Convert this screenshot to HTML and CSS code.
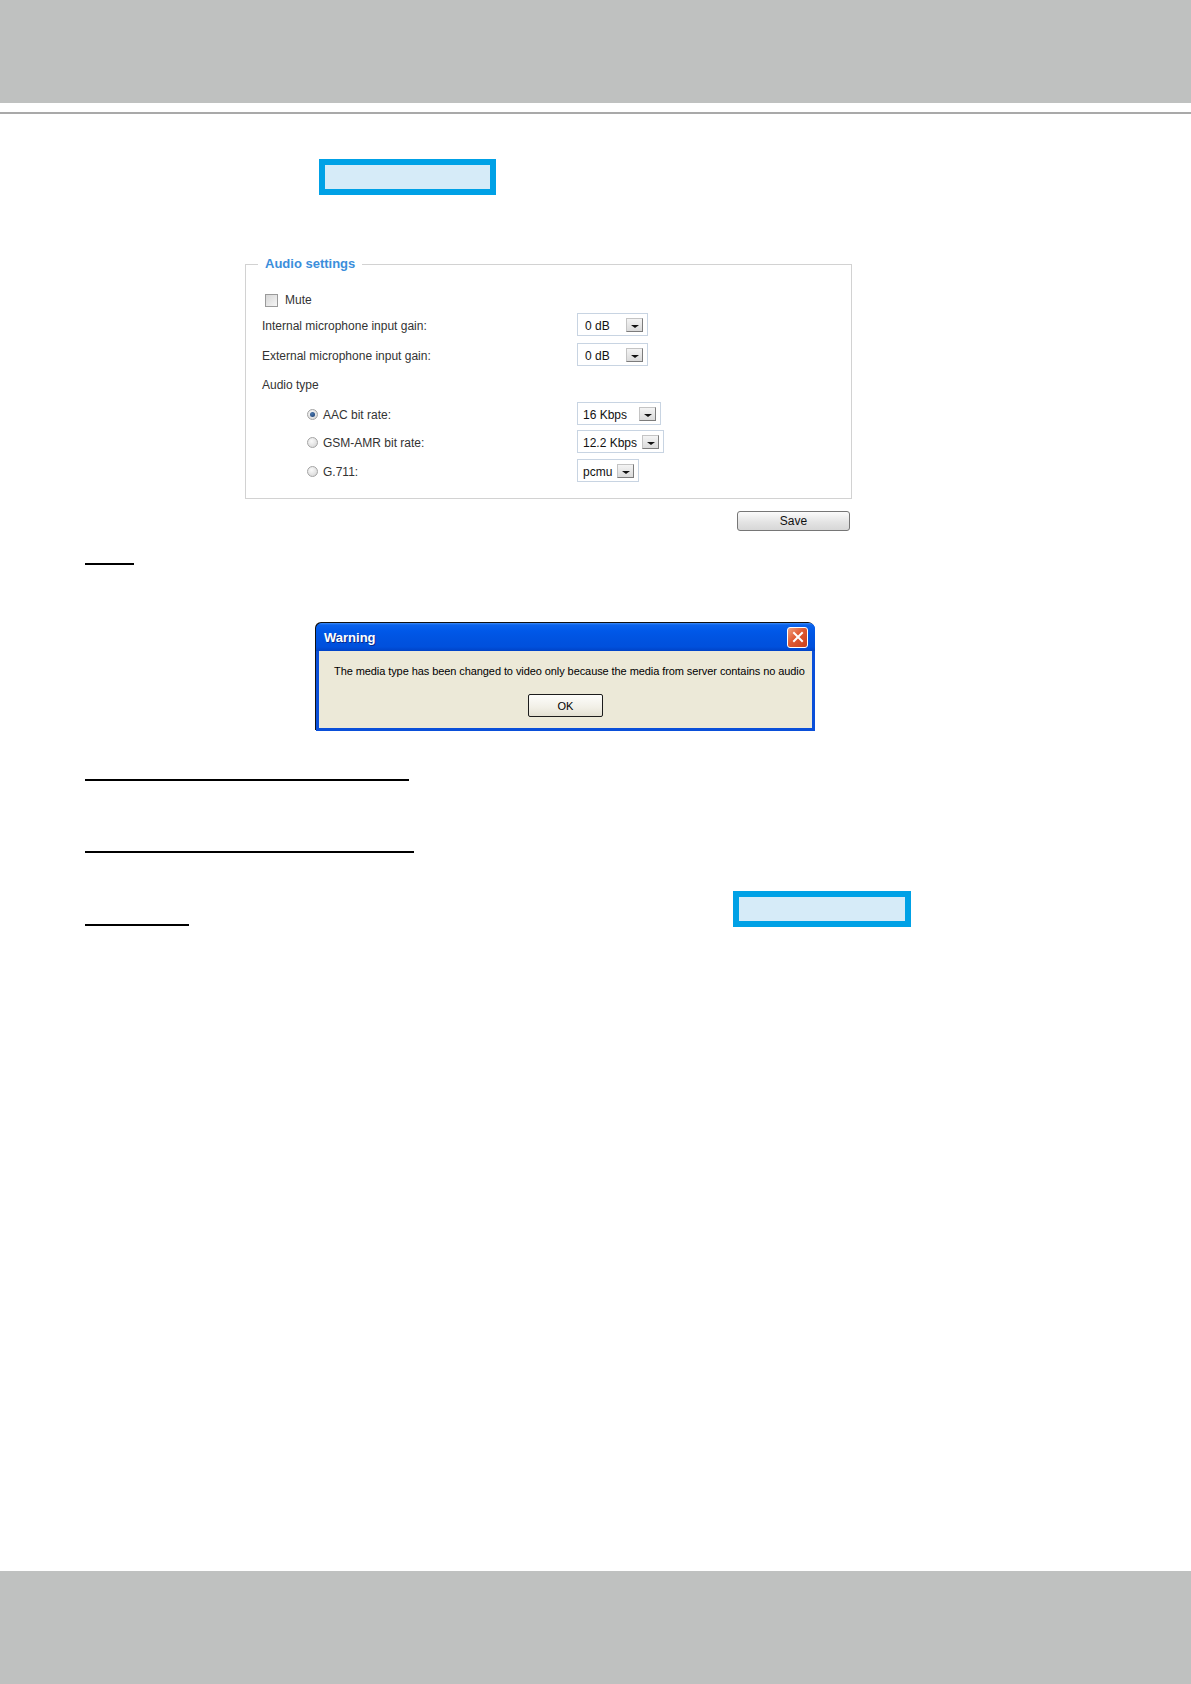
FILE: index.html
```html
<!DOCTYPE html>
<html lang="en">
<head>
<meta charset="utf-8">
<title>Audio settings</title>
<link rel="stylesheet" href="styles.css">
</head>
<body>
<header class="top-band"></header>
<div class="top-rule"></div>
<main class="page">
  <div class="callout callout-a"></div>

  <fieldset class="audio">
    <legend>Audio settings</legend>
    <div class="audio-body">
      <div class="row row-mute"><span class="checkbox"></span><span class="lbl">Mute</span></div>
      <div class="row row-internal">
        <span class="col lbl">Internal microphone input gain:</span>
        <span class="select sel-db"><span class="sel-text">0 dB</span><span class="dd"></span></span>
      </div>
      <div class="row row-external">
        <span class="col lbl">External microphone input gain:</span>
        <span class="select sel-db"><span class="sel-text">0 dB</span><span class="dd"></span></span>
      </div>
      <div class="row row-type"><span class="lbl">Audio type</span></div>
      <div class="row row-aac">
        <span class="col col-radio"><span class="radio radio-on"></span><span class="lbl">AAC bit rate:</span></span>
        <span class="select sel-aac"><span class="sel-text">16 Kbps</span><span class="dd"></span></span>
      </div>
      <div class="row row-gsm">
        <span class="col col-radio"><span class="radio"></span><span class="lbl">GSM-AMR bit rate:</span></span>
        <span class="select sel-gsm"><span class="sel-text">12.2 Kbps</span><span class="dd"></span></span>
      </div>
      <div class="row row-pcmu">
        <span class="col col-radio"><span class="radio"></span><span class="lbl">G.711:</span></span>
        <span class="select sel-pcmu"><span class="sel-text">pcmu</span><span class="dd"></span></span>
      </div>
    </div>
  </fieldset>

  <div class="save-row"><button class="btn-save" type="button">Save</button></div>

  <div class="uline u1"></div>

  <div class="dialog">
    <div class="dlg-title">
      <span class="dlg-caption">Warning</span>
      <span class="dlg-close">
        <svg width="12" height="12" viewBox="0 0 12 12"><path d="M2 2 L10 10 M10 2 L2 10" stroke="#fff" stroke-width="2" stroke-linecap="square"/></svg>
      </span>
    </div>
    <div class="dlg-body">
      <p class="dlg-msg">The media type has been changed to video only because the media from server contains no audio</p>
      <button class="dlg-ok" type="button">OK</button>
    </div>
  </div>

  <div class="uline u2"></div>
  <div class="uline u3"></div>
  <div class="row-last">
    <div class="uline u4"></div>
    <div class="callout callout-b"></div>
  </div>
</main>
<footer class="bottom-band"></footer>
</body>
</html>
```
FILE: styles.css
```css
* { box-sizing: border-box; }

html, body { margin: 0; padding: 0; }

body {
  min-height: 100vh;
  display: flex;
  flex-direction: column;
  background: #fff;
  font-family: "Liberation Sans", Arial, sans-serif;
  color: #333;
}

.top-band {
  height: 103px;
  background: #bfc1c0;
  flex: none;
}

.top-rule {
  margin-top: 9px;
  height: 2px;
  background: #a9a9a9;
  flex: none;
}

.page {
  flex: 1;
  padding-left: 85px;
}

.callout {
  border: 6px solid #00a1e6;
  background: #d6ebf8;
  height: 36px;
}

.callout-a {
  margin-top: 45px;
  margin-left: 234px;
  width: 177px;
}

/* ---------- Audio settings fieldset ---------- */
.audio {
  margin: 61px 0 0 160px;
  width: 607px;
  padding: 0;
  border: 1px solid #d2d2d2;
  min-inline-size: 0;
}

.audio legend {
  margin-left: 12px;
  padding: 0 7px;
  font-size: 13px;
  line-height: 16px;
  font-weight: bold;
  color: #3b8edb;
}

.audio-body {
  padding: 0 0 16px 16px;
}

.row {
  display: flex;
  align-items: center;
  font-size: 12px;
}

.lbl {
  font-size: 12px;
  line-height: 14px;
  color: #333;
}

.row-mute { margin-top: 21px; height: 14px; }
.row-internal { margin-top: 6px; height: 23px; }
.row-external { margin-top: 7px; height: 23px; }
.row-type { margin-top: 12px; height: 14px; }
.row-aac { margin-top: 10px; height: 23px; }
.row-gsm { margin-top: 5px; height: 23px; }
.row-pcmu { margin-top: 6px; height: 23px; }

.checkbox {
  width: 13px;
  height: 13px;
  margin-left: 3px;
  margin-right: 7px;
  border: 1px solid #9a9a9a;
  background: linear-gradient(135deg, #d6d6d6, #f6f6f6);
}

.col {
  width: 315px;
  flex: none;
  padding-top: 3px;
}

.col-radio {
  display: flex;
  align-items: center;
  padding-left: 45px;
  padding-top: 2px;
}

.radio {
  width: 11px;
  height: 11px;
  border-radius: 50%;
  border: 1px solid #a4a4a4;
  background: radial-gradient(circle at 40% 35%, #fafafa 0, #e2e2e2 60%, #cfcfcf 100%);
  margin-right: 5px;
  position: relative;
}

.radio-on::after {
  content: "";
  position: absolute;
  left: 2px;
  top: 2px;
  width: 5px;
  height: 5px;
  border-radius: 50%;
  background: radial-gradient(circle at 40% 35%, #4a78b0, #1c3c6c);
}

.select {
  display: flex;
  align-items: center;
  height: 23px;
  border: 1px solid #c8d4e2;
  background: #fff;
  padding-left: 5px;
}

.sel-text {
  font-size: 12px;
  color: #111;
  padding-top: 2px;
  white-space: nowrap;
}

.sel-db { width: 71px; padding-left: 7px; }
.sel-aac { width: 84px; }
.sel-gsm { width: 87px; }
.sel-pcmu { width: 62px; }

.dd {
  margin-left: auto;
  margin-right: 4px;
  width: 17px;
  height: 14px;
  flex: none;
  border: 1px solid;
  border-color: #c4c4c4 #7c7c7c #7c7c7c #c4c4c4;
  background: linear-gradient(#f4f4f4, #dadada);
  display: flex;
  align-items: center;
  justify-content: center;
}

.dd::after {
  content: "";
  margin-top: 4px;
  border-left: 4px solid transparent;
  border-right: 4px solid transparent;
  border-top: 3px solid #111;
}

/* ---------- Save ---------- */
.save-row {
  margin-top: 12px;
  padding-left: 652px;
}

.btn-save {
  display: block;
  width: 113px;
  height: 20px;
  padding: 0;
  border: 1px solid #767676;
  border-radius: 3px;
  background: linear-gradient(#fbfbfb, #e4e4e4 55%, #d7d7d7);
  font-family: "Liberation Sans", Arial, sans-serif;
  font-size: 12px;
  color: #111;
}

/* ---------- underlines ---------- */
.uline {
  height: 2px;
  background: #000;
}

.u1 { margin-top: 32px; width: 49px; }
.u2 { margin-top: 48px; width: 324px; }
.u3 { margin-top: 70px; width: 329px; }

.row-last {
  margin-top: 38px;
  display: flex;
  align-items: flex-end;
}

.u4 { width: 104px; margin-bottom: 1px; flex: none; }

.callout-b {
  margin-left: 544px;
  width: 178px;
  flex: none;
}

/* ---------- Warning dialog ---------- */
.dialog {
  margin-top: 58px;
  margin-left: 231px;
  width: 499px;
  height: 108px;
  display: flex;
  flex-direction: column;
  border-radius: 6px 6px 0 0;
  background: #0a4fd9;
  overflow: hidden;
  box-shadow: -1px -1px 0 #111;
}

.dlg-title {
  height: 28px;
  flex: none;
  display: flex;
  align-items: center;
  justify-content: space-between;
  padding: 0 7px 0 8px;
  background: linear-gradient(#3d8cf7 0, #0a62ec 2px, #0058e8 8px, #0054e2 50%, #0050dc 85%, #0043c7 100%);
}

.dlg-caption {
  font-family: "Liberation Sans", Arial, sans-serif;
  font-weight: bold;
  font-size: 13px;
  color: #fff;
  text-shadow: 1px 1px 0 #0a2a8a;
  padding-top: 1px;
}

.dlg-close {
  width: 21px;
  height: 21px;
  border: 1px solid #fff;
  border-radius: 3px;
  background: linear-gradient(135deg, #f0a07e, #e05a32 45%, #c8401c);
  display: flex;
  align-items: center;
  justify-content: center;
}

.dlg-body {
  flex: 1;
  margin: 0 3px 3px;
  background: #ece9d8;
  display: flex;
  flex-direction: column;
  align-items: center;
}

.dlg-msg {
  margin: 13px 0 0;
  align-self: flex-start;
  padding-left: 15px;
  font-family: "Liberation Sans", Arial, sans-serif;
  font-size: 11px;
  line-height: 14px;
  letter-spacing: -0.08px;
  color: #000;
  white-space: nowrap;
}

.dlg-ok {
  margin-top: 16px;
  width: 75px;
  height: 23px;
  padding: 0;
  border: 1px solid #1c1c1c;
  border-radius: 2px;
  background: linear-gradient(#fdfdfb, #f1efe6 60%, #e3e0d2);
  font-family: "Liberation Sans", Arial, sans-serif;
  font-size: 11px;
  color: #000;
}

/* ---------- footer ---------- */
.bottom-band {
  height: 113px;
  flex: none;
  background: #bfc1c0;
}
```
